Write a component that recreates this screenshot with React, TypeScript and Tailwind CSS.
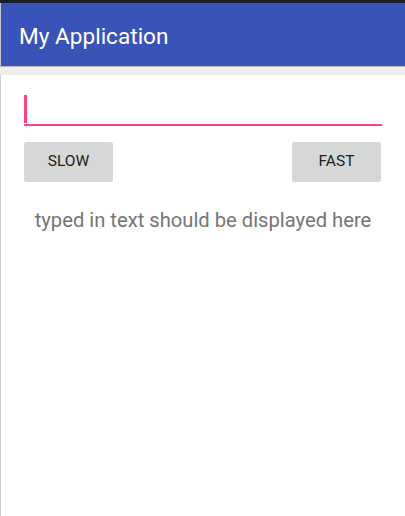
export default function App() {
  return (
    <div
      className="w-[405px] h-[516px] bg-white flex flex-col overflow-hidden"
      style={{ fontFamily: "Roboto, 'Liberation Sans', sans-serif" }}
    >
      <div className="h-[3px] bg-[#1c1c2a]" />
      <div className="h-[63px] bg-[#3a53b8] border-l border-[#c8c8c8] flex items-center pl-[18px]">
        <h1 className="text-[22.6px] text-white leading-none pt-[5px]">My Application</h1>
      </div>
      <div className="h-[1px] bg-[#b4b4b4]" />
      <div className="h-[8px] bg-[#eeeeee]" />
      <div className="flex-1 border-l border-[#cfcfcf] flex flex-col px-[23px]">
        <div className="mt-[20px] h-[31px] border-b-[2px] border-[#ff4081] flex items-start">
          <div className="w-[3px] h-[28px] bg-[#ff4081]" />
        </div>
        <div className="mt-[16px] flex justify-between pr-[1px]">
          <button className="w-[89px] h-[40px] bg-[#d6d7d7] rounded-[2px] text-[15.5px] text-[#222]">
            SLOW
          </button>
          <button className="w-[89px] h-[40px] bg-[#d6d7d7] rounded-[2px] text-[15.5px] text-[#222]">
            FAST
          </button>
        </div>
        <p className="mt-[28px] text-center text-[20.2px] text-[#757575] leading-none">
          typed in text should be displayed here
        </p>
      </div>
    </div>
  );
}
